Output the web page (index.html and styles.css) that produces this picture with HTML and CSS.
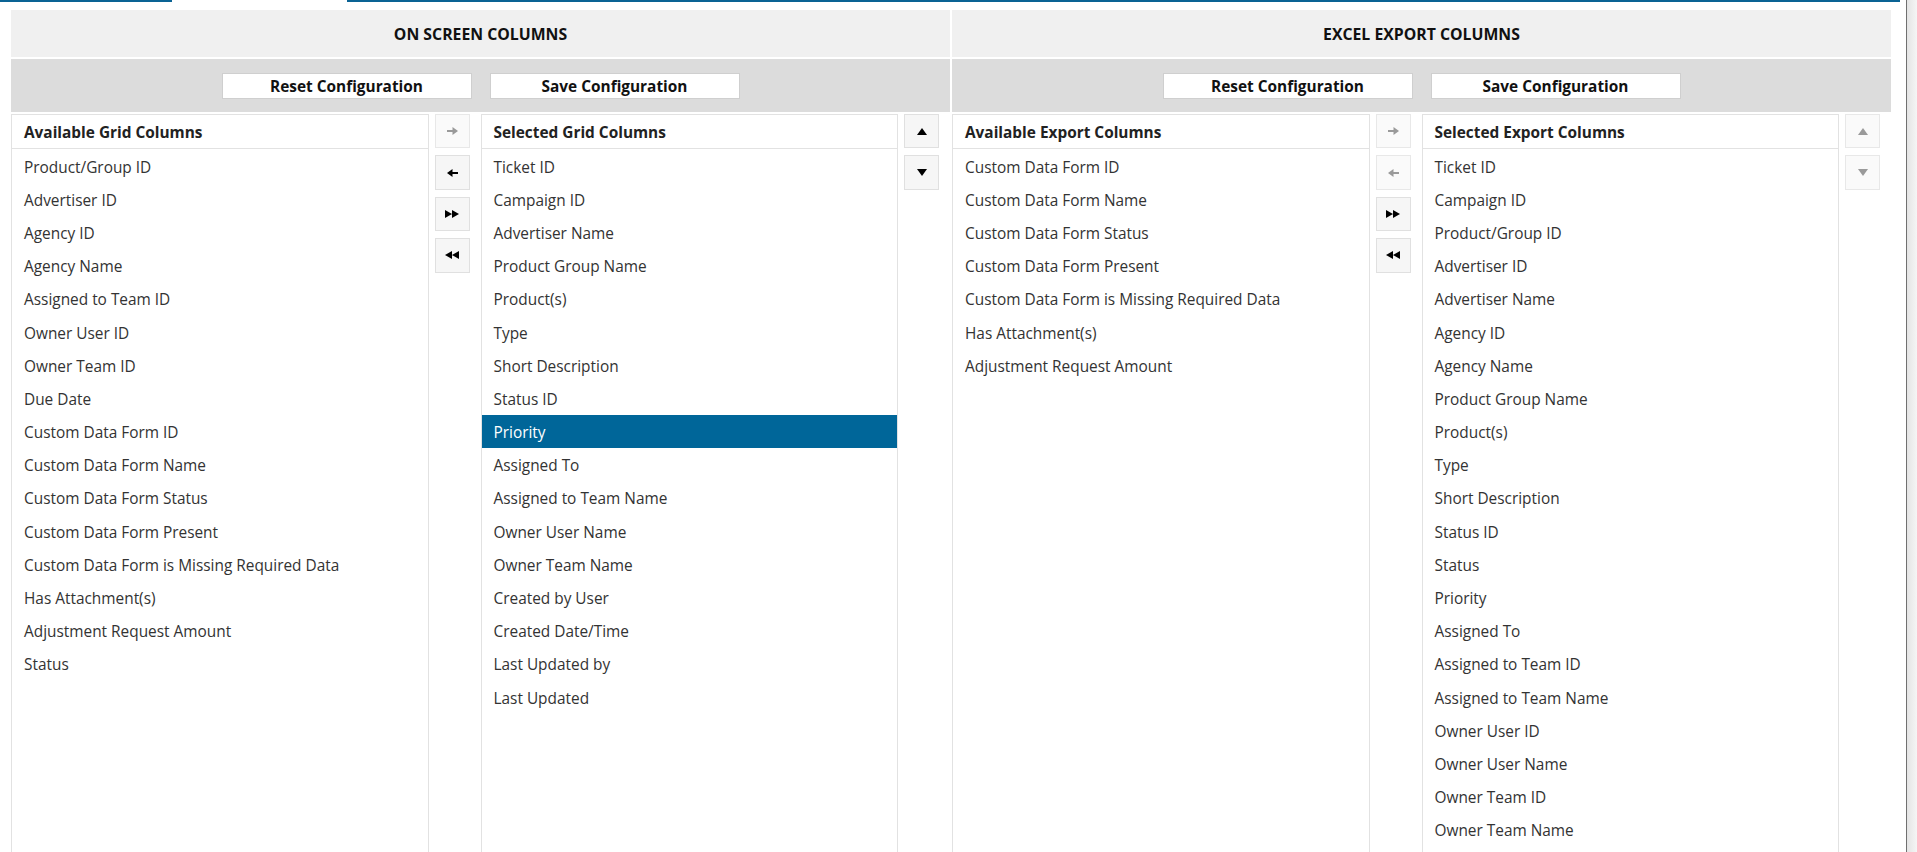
FILE: index.html
```html
<!DOCTYPE html>
<html lang="en">
<head>
<meta charset="utf-8">
<title>Column Configuration</title>
<link rel="stylesheet" href="styles.css">
</head>
<body>
<div class="tabline"><span class="seg seg-a"></span><span class="seg-gap"></span><span class="seg seg-b"></span></div>
<div class="page">
  <section class="panel">
    <div class="panel-title">ON SCREEN COLUMNS</div>
    <div class="toolbar">
      <button class="cfg-btn">Reset Configuration</button>
      <button class="cfg-btn">Save Configuration</button>
    </div>
    <div class="lists">
      <div class="unit">
        <div class="list">
          <div class="list-head">Available Grid Columns</div>
          <ul class="items">
            <li>Product/Group ID</li>
            <li>Advertiser ID</li>
            <li>Agency ID</li>
            <li>Agency Name</li>
            <li>Assigned to Team ID</li>
            <li>Owner User ID</li>
            <li>Owner Team ID</li>
            <li>Due Date</li>
            <li>Custom Data Form ID</li>
            <li>Custom Data Form Name</li>
            <li>Custom Data Form Status</li>
            <li>Custom Data Form Present</li>
            <li>Custom Data Form is Missing Required Data</li>
            <li>Has Attachment(s)</li>
            <li>Adjustment Request Amount</li>
            <li>Status</li>
          </ul>
        </div>
        <div class="tools">
          <button class="tool off"><svg class="ico" width="11" height="8" viewBox="0 0 11 8"><path d="M0 3H5.5V0L11 4L5.5 8V5H0Z"/></svg></button>
          <button class="tool"><svg class="ico" width="11" height="8" viewBox="0 0 11 8"><path d="M11 3H5.5V0L0 4L5.5 8V5H11Z"/></svg></button>
          <button class="tool"><svg class="ico" width="14" height="8" viewBox="0 0 14 8"><path d="M0 0L7 4L0 8Z M7 0L14 4L7 8Z"/></svg></button>
          <button class="tool"><svg class="ico" width="14" height="8" viewBox="0 0 14 8"><path d="M14 0L7 4L14 8Z M7 0L0 4L7 8Z"/></svg></button>
        </div>
      </div>
      <div class="unit">
        <div class="list">
          <div class="list-head">Selected Grid Columns</div>
          <ul class="items">
            <li>Ticket ID</li>
            <li>Campaign ID</li>
            <li>Advertiser Name</li>
            <li>Product Group Name</li>
            <li>Product(s)</li>
            <li>Type</li>
            <li>Short Description</li>
            <li>Status ID</li>
            <li class="selected">Priority</li>
            <li>Assigned To</li>
            <li>Assigned to Team Name</li>
            <li>Owner User Name</li>
            <li>Owner Team Name</li>
            <li>Created by User</li>
            <li>Created Date/Time</li>
            <li>Last Updated by</li>
            <li>Last Updated</li>
          </ul>
        </div>
        <div class="tools">
          <button class="tool"><svg class="ico" width="10" height="7" viewBox="0 0 10 7"><path d="M5 0L10 7H0Z"/></svg></button>
          <button class="tool"><svg class="ico" width="10" height="7" viewBox="0 0 10 7"><path d="M0 0H10L5 7Z"/></svg></button>
        </div>
      </div>
    </div>
  </section>

  <section class="panel">
    <div class="panel-title">EXCEL EXPORT COLUMNS</div>
    <div class="toolbar">
      <button class="cfg-btn">Reset Configuration</button>
      <button class="cfg-btn">Save Configuration</button>
    </div>
    <div class="lists">
      <div class="unit">
        <div class="list">
          <div class="list-head">Available Export Columns</div>
          <ul class="items">
            <li>Custom Data Form ID</li>
            <li>Custom Data Form Name</li>
            <li>Custom Data Form Status</li>
            <li>Custom Data Form Present</li>
            <li>Custom Data Form is Missing Required Data</li>
            <li>Has Attachment(s)</li>
            <li>Adjustment Request Amount</li>
          </ul>
        </div>
        <div class="tools">
          <button class="tool off"><svg class="ico" width="11" height="8" viewBox="0 0 11 8"><path d="M0 3H5.5V0L11 4L5.5 8V5H0Z"/></svg></button>
          <button class="tool off"><svg class="ico" width="11" height="8" viewBox="0 0 11 8"><path d="M11 3H5.5V0L0 4L5.5 8V5H11Z"/></svg></button>
          <button class="tool"><svg class="ico" width="14" height="8" viewBox="0 0 14 8"><path d="M0 0L7 4L0 8Z M7 0L14 4L7 8Z"/></svg></button>
          <button class="tool"><svg class="ico" width="14" height="8" viewBox="0 0 14 8"><path d="M14 0L7 4L14 8Z M7 0L0 4L7 8Z"/></svg></button>
        </div>
      </div>
      <div class="unit">
        <div class="list">
          <div class="list-head">Selected Export Columns</div>
          <ul class="items">
            <li>Ticket ID</li>
            <li>Campaign ID</li>
            <li>Product/Group ID</li>
            <li>Advertiser ID</li>
            <li>Advertiser Name</li>
            <li>Agency ID</li>
            <li>Agency Name</li>
            <li>Product Group Name</li>
            <li>Product(s)</li>
            <li>Type</li>
            <li>Short Description</li>
            <li>Status ID</li>
            <li>Status</li>
            <li>Priority</li>
            <li>Assigned To</li>
            <li>Assigned to Team ID</li>
            <li>Assigned to Team Name</li>
            <li>Owner User ID</li>
            <li>Owner User Name</li>
            <li>Owner Team ID</li>
            <li>Owner Team Name</li>
          </ul>
        </div>
        <div class="tools">
          <button class="tool off"><svg class="ico" width="10" height="7" viewBox="0 0 10 7"><path d="M5 0L10 7H0Z"/></svg></button>
          <button class="tool off"><svg class="ico" width="10" height="7" viewBox="0 0 10 7"><path d="M0 0H10L5 7Z"/></svg></button>
        </div>
      </div>
    </div>
  </section>
</div>
<div class="frame-edge"></div>
</body>
</html>
```

FILE: styles.css
```css
html, body {
  margin: 0;
  height: 852px;
  overflow: hidden;
  background: #ffffff;
}

body {
  position: relative;
  font-family: "Open Sans", "Liberation Sans", sans-serif;
  font-size: 15.4px;
  color: #333333;
}

.tabline {
  display: flex;
  height: 2px;
}

.seg {
  display: block;
  background: #0a6394;
}

.seg-a { width: 172px; }
.seg-gap { width: 175px; }
.seg-b { width: 1553px; }

.page {
  display: flex;
  gap: 2px;
  padding: 8px 0 0 11px;
}

.panel {
  width: 939px;
  display: flex;
  flex-direction: column;
}

.panel-title {
  height: 47px;
  background: #f0f0f0;
  display: flex;
  align-items: center;
  justify-content: center;
  font-weight: 700;
  font-size: 15.8px;
  color: #111111;
}

.toolbar {
  margin-top: 2px;
  height: 53px;
  background: #dcdcdc;
  display: flex;
  align-items: center;
  justify-content: center;
  gap: 18px;
}

.cfg-btn {
  box-sizing: border-box;
  width: 250px;
  height: 26px;
  padding: 2px 0 0;
  background: #ffffff;
  border: 1px solid #cfcfcf;
  font-family: inherit;
  font-size: 15.4px;
  font-weight: 700;
  color: #111111;
}

.lists {
  margin-top: 2px;
  display: flex;
}

.unit {
  flex: 1;
  display: flex;
}

.list {
  flex: 1;
  height: 760px;
  border: 1px solid #e2e2e2;
}

.list-head {
  box-sizing: border-box;
  height: 34px;
  border-bottom: 1px solid #e2e2e2;
  padding: 2px 12px 0;
  display: flex;
  align-items: center;
  font-weight: 700;
  color: #222222;
}

.items {
  list-style: none;
  margin: 0;
  padding: 0;
}

.items li {
  box-sizing: border-box;
  height: 33.2px;
  padding: 3px 12px 0;
  display: flex;
  align-items: center;
  color: #333333;
}

.items li.selected {
  background: #006699;
  color: #ffffff;
}

.tools {
  width: 35px;
  margin: 0 11px 0 6px;
  display: flex;
  flex-direction: column;
  gap: 7px;
}

.tool {
  height: 34.4px;
  padding: 0;
  background: #f6f6f6;
  border: 1px solid #e0e0e0;
  display: flex;
  align-items: center;
  justify-content: center;
}

.tool .ico {
  fill: #000000;
}

.tool.off {
  background: #fafafa;
  border-color: #e8e8e8;
}

.tool.off .ico {
  fill: #9a9a9a;
}

.frame-edge {
  position: absolute;
  top: 0;
  left: 1906px;
  width: 11px;
  height: 852px;
  border-left: 1px solid #707070;
  background: linear-gradient(to right, #e4e4e4, #f7f7f7);
}
```
